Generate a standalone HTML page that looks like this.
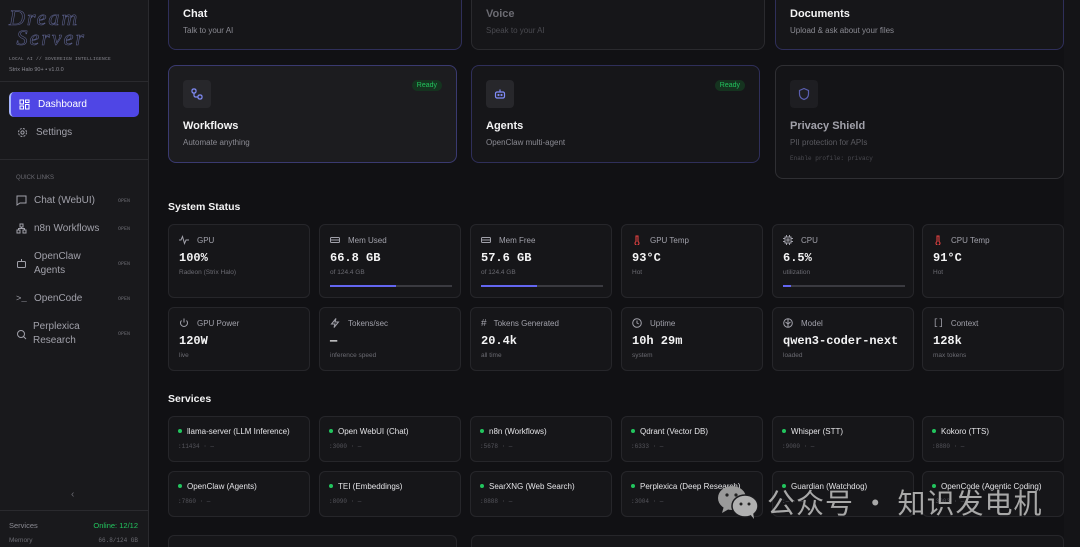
<!DOCTYPE html>
<html style="overflow:hidden;height:547px"><head><meta charset="utf-8"><style>
*{box-sizing:border-box;margin:0;padding:0}
html,body{overflow:hidden}
body{width:1080px;height:547px;background:#111114;font-family:"Liberation Sans","Noto Sans CJK SC",sans-serif;color:#e4e4e7;position:relative}
.sb{position:absolute;left:0;top:0;width:149px;height:547px;background:#19191c;border-right:1px solid #2a2a2e}
.mono{font-family:"Liberation Mono",monospace}
.abs{position:absolute}
.nav{position:absolute;left:9px;width:130px;height:25px;border-radius:5px;font-size:10px;color:#a1a1aa;display:flex;align-items:center;padding-left:8px}
.nav svg{margin-right:8px}
.ql{position:absolute;left:16px;font-size:10px;color:#a1a1aa;line-height:14px}
.open{position:absolute;left:118px;font-size:5px;color:#6b6b72;font-family:"Liberation Mono",monospace}
.card{position:absolute;border:1px solid #2f2f5a;border-radius:8px;background:#161619}
.ct{position:absolute;left:14px;font-size:11px;font-weight:bold;color:#f4f4f5}
.cs{position:absolute;left:14px;font-size:8px;color:#8a8a92}
.ib{position:absolute;left:14px;top:14px;width:28px;height:28px;border-radius:4px;background:#27272b;display:flex;align-items:center;justify-content:center}
.rdy{position:absolute;right:14px;top:14px;background:#15331f;color:#22c55e;font-size:7px;padding:2px 5px;border-radius:7px}
.st{position:absolute;width:142px;border:1px solid #26262a;border-radius:6px;background:#161619}
.st .l{position:absolute;left:10px;top:10px;font-size:8px;color:#a1a1aa;display:flex;align-items:center}
.st .l svg{margin-right:8px}
.st .v{position:absolute;left:10px;top:26px;font-family:"Liberation Mono",monospace;font-weight:bold;font-size:12px;color:#f4f4f5}
.st .s{position:absolute;left:10px;top:44px;font-size:6.5px;color:#6b6b72}
.bar{position:absolute;left:10px;top:60px;width:122px;height:2px;background:#3a3a40}
.bar i{display:block;height:2px;background:#6366f1}
.sv{position:absolute;width:142px;height:46px;border:1px solid #26262a;border-radius:6px;background:#161619}
.sv .n{position:absolute;left:9px;top:10px;font-size:8px;color:#e4e4e7;white-space:nowrap}
.sv .n:before{content:"";display:inline-block;width:4px;height:4px;border-radius:50%;background:#22c55e;margin-right:5px;vertical-align:1px}
.sv .p{position:absolute;left:9px;top:26px;font-size:6px;color:#55555c;font-family:"Liberation Mono",monospace}
h3{position:absolute;left:168px;font-size:10.5px;font-weight:bold;color:#f4f4f5}
</style></head><body>
<div class="sb">
 <div class="abs" style="left:9px;top:8px;font-family:'Liberation Serif',serif;font-style:italic;font-size:22px;line-height:20px;color:transparent;-webkit-text-stroke:0.6px #5a5f8a;letter-spacing:2px">Dream<br>&nbsp;Server</div>
 <div class="abs mono" style="left:9px;top:57px;font-size:4.5px;color:#8a8a92;letter-spacing:.3px">LOCAL AI // SOVEREIGN INTELLIGENCE</div>
 <div class="abs" style="left:9px;top:67px;font-size:5.5px;color:#8a8a92">Strix Halo 90+ • v1.0.0</div>
 <div class="abs" style="left:0;top:81px;width:148px;height:1px;background:#2a2a2e"></div>
 <div class="nav" style="top:92px;background:#4f46e5;color:#fff;border-left:2px solid #a5b4fc"><svg width="11" height="11" viewBox="0 0 11 11" fill="none" stroke="#fff" stroke-width="1"><rect x="1" y="1" width="3.5" height="4"/><rect x="6.5" y="1" width="3.5" height="2.5"/><rect x="1" y="7" width="3.5" height="3"/><rect x="6.5" y="5.5" width="3.5" height="4.5"/></svg>Dashboard</div>
 <div class="nav" style="top:120px"><svg width="11" height="11" viewBox="0 0 11 11" fill="none" stroke="#a1a1aa" stroke-width="1"><circle cx="5.5" cy="5.5" r="1.6"/><circle cx="5.5" cy="5.5" r="4" stroke-dasharray="2 1.2"/></svg>Settings</div>
 <div class="abs" style="left:0;top:159px;width:148px;height:1px;background:#2a2a2e"></div>
 <div class="abs" style="left:16px;top:175px;font-size:6px;color:#6b6b72">QUICK LINKS</div>
 <svg class="abs" style="left:16px;top:195px" width="11" height="11" viewBox="0 0 11 11" fill="none" stroke="#a1a1aa"><path d="M1 1h9v7H4l-3 2z"/></svg><div class="ql" style="left:34px;top:194px">Chat (WebUI)</div><div class="open" style="top:198px">OPEN</div>
 <svg class="abs" style="left:16px;top:223px" width="11" height="11" viewBox="0 0 11 11" fill="none" stroke="#a1a1aa"><rect x="4" y="1" width="3" height="3"/><rect x="1" y="7" width="3" height="3"/><rect x="7" y="7" width="3" height="3"/><path d="M5.5 4v1.5M2.5 7V5.5h6V7"/></svg><div class="ql" style="left:34px;top:222px">n8n Workflows</div><div class="open" style="top:226px">OPEN</div>
 <svg class="abs" style="left:16px;top:258px" width="11" height="11" viewBox="0 0 11 11" fill="none" stroke="#a1a1aa"><rect x="1.5" y="3.5" width="8" height="6" rx="1"/><path d="M5.5 1v2.5"/></svg><div class="ql" style="left:34px;top:250px">OpenClaw<br>Agents</div><div class="open" style="top:261px">OPEN</div>
 <div class="ql" style="left:16px;top:292px;font-family:'Liberation Mono',monospace;font-size:9px">&gt;_</div><div class="ql" style="left:34px;top:292px">OpenCode</div><div class="open" style="top:296px">OPEN</div>
 <svg class="abs" style="left:16px;top:329px" width="11" height="11" viewBox="0 0 11 11" fill="none" stroke="#a1a1aa"><circle cx="5" cy="5" r="3.5"/><path d="M7.5 7.5L10 10"/></svg><div class="ql" style="left:33px;top:320px">Perplexica<br>Research</div><div class="open" style="top:331px">OPEN</div>
 <div class="abs" style="left:71px;top:489px;font-size:10px;color:#6b6b72">‹</div>
 <div class="abs" style="left:0;top:510px;width:148px;height:1px;background:#2a2a2e"></div>
 <div class="abs" style="left:9px;top:521px;font-size:7.5px;color:#8a8a92">Services</div>
 <div class="abs" style="right:10px;top:521px;font-size:7.5px;color:#22c55e">Online: 12/12</div>
 <div class="abs" style="left:9px;top:537px;font-size:6.5px;color:#6b6b72">Memory</div>
 <div class="abs mono" style="right:10px;top:537px;font-size:6px;color:#6b6b72">66.8/124 GB</div>
</div>
<div class="abs" style="left:1064px;top:0;width:16px;height:547px;background:#141417"></div>

<div class="card" style="left:168px;top:-20px;width:294px;height:70px"><div class="ct" style="top:27px">Chat</div><div class="cs" style="top:45px">Talk to your AI</div></div>
<div class="card" style="left:471px;top:-20px;width:294px;height:70px;border-color:#2a2a2e"><div class="ct" style="top:27px;color:#6b6b72">Voice</div><div class="cs" style="top:45px;color:#4a4a50">Speak to your AI</div></div>
<div class="card" style="left:775px;top:-20px;width:289px;height:70px"><div class="ct" style="top:27px">Documents</div><div class="cs" style="top:45px">Upload &amp; ask about your files</div></div>

<div class="card" style="left:168px;top:65px;width:289px;height:98px;background:#1c1c1f;border-color:#3a3a70"><div class="ib"><svg width="14" height="14" viewBox="0 0 14 14" fill="none" stroke="#818cf8" stroke-width="1.2"><rect x="2" y="2" width="4" height="4" rx="1.5"/><rect x="8" y="8" width="4" height="4" rx="1.5"/><path d="M4 6v2.5a1.5 1.5 0 0 0 1.5 1.5H8"/></svg></div><div class="rdy">Ready</div><div class="ct" style="top:54px">Workflows</div><div class="cs" style="top:72px">Automate anything</div></div>
<div class="card" style="left:471px;top:65px;width:289px;height:98px"><div class="ib"><svg width="14" height="14" viewBox="0 0 14 14" fill="none" stroke="#818cf8" stroke-width="1.2"><rect x="2.5" y="5" width="9" height="6" rx="1.5"/><path d="M7 2.5V5"/><circle cx="5.5" cy="8" r=".5"/><circle cx="8.5" cy="8" r=".5"/></svg></div><div class="rdy">Ready</div><div class="ct" style="top:54px">Agents</div><div class="cs" style="top:72px">OpenClaw multi-agent</div></div>
<div class="card" style="left:775px;top:65px;width:289px;height:114px;border-color:#2f2f33;background:#141417"><div class="ib" style="background:#1e1e22"><svg width="14" height="14" viewBox="0 0 14 14" fill="none" stroke="#5b5fb0" stroke-width="1.2"><path d="M7 1.5l4.5 2v3.5c0 3-2.2 4.8-4.5 5.5C4.7 11.8 2.5 10 2.5 7V3.5z"/></svg></div><div class="ct" style="top:54px;color:#a1a1aa">Privacy Shield</div><div class="cs" style="top:72px;color:#5a5a60">PII protection for APIs</div><div class="cs mono" style="top:89px;font-size:6px;color:#4a4a50">Enable profile: privacy</div></div>

<h3 style="top:201px">System Status</h3>
<div class="st" style="left:168px;top:224px;height:74px"><div class="l"><svg width="10" height="10" viewBox="0 0 10 10" fill="none" stroke="#a1a1aa"><path d="M0 5h2l1.5-3.5 2 7 1.5-3.5h3"/></svg>GPU</div><div class="v">100%</div><div class="s">Radeon (Strix Halo)</div></div>
<div class="st" style="left:319px;top:224px;height:74px"><div class="l"><svg width="10" height="10" viewBox="0 0 10 10" fill="none" stroke="#a1a1aa"><rect x=".5" y="2.5" width="9" height="5" rx="1"/><path d="M.5 5h9"/></svg>Mem Used</div><div class="v">66.8 GB</div><div class="s">of 124.4 GB</div><div class="bar"><i style="width:54%"></i></div></div>
<div class="st" style="left:470px;top:224px;height:74px"><div class="l"><svg width="10" height="10" viewBox="0 0 10 10" fill="none" stroke="#a1a1aa"><rect x=".5" y="2.5" width="9" height="5" rx="1"/><path d="M.5 5h9"/></svg>Mem Free</div><div class="v">57.6 GB</div><div class="s">of 124.4 GB</div><div class="bar"><i style="width:46%"></i></div></div>
<div class="st" style="left:621px;top:224px;height:74px"><div class="l"><svg width="10" height="10" viewBox="0 0 10 10" fill="none" stroke="#ef4444"><path d="M4 1h2v5.5a2 2 0 1 1-2 0z"/></svg>GPU Temp</div><div class="v">93°C</div><div class="s">Hot</div></div>
<div class="st" style="left:772px;top:224px;height:74px"><div class="l"><svg width="10" height="10" viewBox="0 0 10 10" fill="none" stroke="#a1a1aa"><rect x="2" y="2" width="6" height="6"/><rect x="4" y="4" width="2" height="2"/><path d="M3.5 0v2M6.5 0v2M3.5 8v2M6.5 8v2M0 3.5h2M0 6.5h2M8 3.5h2M8 6.5h2"/></svg>CPU</div><div class="v">6.5%</div><div class="s">utilization</div><div class="bar"><i style="width:6.5%"></i></div></div>
<div class="st" style="left:922px;top:224px;height:74px"><div class="l"><svg width="10" height="10" viewBox="0 0 10 10" fill="none" stroke="#ef4444"><path d="M4 1h2v5.5a2 2 0 1 1-2 0z"/></svg>CPU Temp</div><div class="v">91°C</div><div class="s">Hot</div></div>

<div class="st" style="left:168px;top:307px;height:64px"><div class="l"><svg width="10" height="10" viewBox="0 0 10 10" fill="none" stroke="#a1a1aa"><path d="M5 .5v4M2.5 2.5a3.5 3.5 0 1 0 5 0"/></svg>GPU Power</div><div class="v">120W</div><div class="s">live</div></div>
<div class="st" style="left:319px;top:307px;height:64px"><div class="l"><svg width="10" height="10" viewBox="0 0 10 10" fill="none" stroke="#a1a1aa"><path d="M6 .5L1.5 6h3.5L4 9.5 8.5 4H5z"/></svg>Tokens/sec</div><div class="v">—</div><div class="s">inference speed</div></div>
<div class="st" style="left:470px;top:307px;height:64px"><div class="l"><span style="font-size:10px;margin-right:7px">#</span>Tokens Generated</div><div class="v">20.4k</div><div class="s">all time</div></div>
<div class="st" style="left:621px;top:307px;height:64px"><div class="l"><svg width="10" height="10" viewBox="0 0 10 10" fill="none" stroke="#a1a1aa"><circle cx="5" cy="5" r="4.3"/><path d="M5 2.5V5l1.8 1"/></svg>Uptime</div><div class="v">10h 29m</div><div class="s">system</div></div>
<div class="st" style="left:772px;top:307px;height:64px"><div class="l"><svg width="10" height="10" viewBox="0 0 10 10" fill="none" stroke="#a1a1aa"><circle cx="5" cy="5" r="4.3"/><path d="M5 1v8M2.5 4l2.5 2 2.5-2"/></svg>Model</div><div class="v">qwen3-coder-next</div><div class="s">loaded</div></div>
<div class="st" style="left:922px;top:307px;height:64px"><div class="l"><span style="font-size:9px;margin-right:7px;font-family:'Liberation Mono',monospace">[]</span>Context</div><div class="v">128k</div><div class="s">max tokens</div></div>

<h3 style="top:393px">Services</h3>
<div class="sv" style="left:168px;top:416px"><div class="n">llama-server (LLM Inference)</div><div class="p">:11434 · —</div></div>
<div class="sv" style="left:319px;top:416px"><div class="n">Open WebUI (Chat)</div><div class="p">:3000 · —</div></div>
<div class="sv" style="left:470px;top:416px"><div class="n">n8n (Workflows)</div><div class="p">:5678 · —</div></div>
<div class="sv" style="left:621px;top:416px"><div class="n">Qdrant (Vector DB)</div><div class="p">:6333 · —</div></div>
<div class="sv" style="left:772px;top:416px"><div class="n">Whisper (STT)</div><div class="p">:9000 · —</div></div>
<div class="sv" style="left:922px;top:416px"><div class="n">Kokoro (TTS)</div><div class="p">:8880 · —</div></div>
<div class="sv" style="left:168px;top:471px"><div class="n">OpenClaw (Agents)</div><div class="p">:7860 · —</div></div>
<div class="sv" style="left:319px;top:471px"><div class="n">TEI (Embeddings)</div><div class="p">:8090 · —</div></div>
<div class="sv" style="left:470px;top:471px"><div class="n">SearXNG (Web Search)</div><div class="p">:8888 · —</div></div>
<div class="sv" style="left:621px;top:471px"><div class="n">Perplexica (Deep Research)</div><div class="p">:3004 · —</div></div>
<div class="sv" style="left:772px;top:471px"><div class="n">Guardian (Watchdog)</div><div class="p">:— · —</div></div>
<div class="sv" style="left:922px;top:471px"><div class="n">OpenCode (Agentic Coding)</div><div class="p">:3003 · —</div></div>
<div class="abs" style="left:168px;top:535px;width:289px;height:12px;border:1px solid #26262a;border-bottom:none;border-radius:6px 6px 0 0;background:#161619"></div>
<div class="abs" style="left:471px;top:535px;width:593px;height:12px;border:1px solid #26262a;border-bottom:none;border-radius:6px 6px 0 0;background:#161619"></div>

<svg class="abs" style="left:716px;top:484px" width="44" height="36" viewBox="0 0 44 36"><ellipse cx="16" cy="14" rx="14" ry="12" fill="#9a9a9a"/><path d="M8 22l-2 7 7-4z" fill="#9a9a9a"/><ellipse cx="29" cy="22" rx="13" ry="11" fill="#b0b0b0" stroke="#1a1a1d" stroke-width="1.5"/><path d="M34 30l4 5-1-7z" fill="#b0b0b0"/><circle cx="11" cy="11" r="1.6" fill="#222"/><circle cx="20" cy="11" r="1.6" fill="#222"/><circle cx="25" cy="20" r="1.5" fill="#222"/><circle cx="33" cy="20" r="1.5" fill="#222"/></svg>
<div class="abs" style="left:767px;top:482px;font-family:'Noto Sans CJK SC',sans-serif;font-size:28px;color:#a8a8a8;letter-spacing:1px;white-space:nowrap">公众号 · 知识发电机</div>
</body></html>
